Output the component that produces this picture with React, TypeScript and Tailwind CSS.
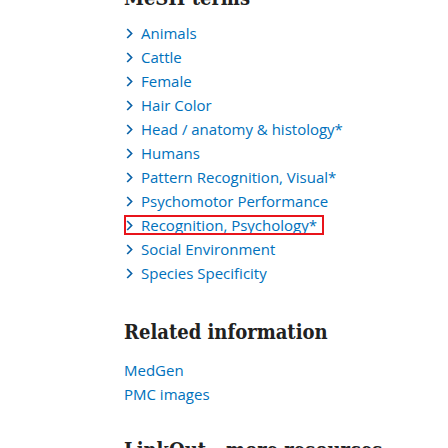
import React from "react";

const meshTerms = [
  "Animals",
  "Cattle",
  "Female",
  "Hair Color",
  "Head / anatomy & histology*",
  "Humans",
  "Pattern Recognition, Visual*",
  "Psychomotor Performance",
  "Recognition, Psychology*",
  "Social Environment",
  "Species Specificity",
];

const related = ["MedGen", "PMC images"];

function Chevron() {
  return (
    <svg width="7" height="11" viewBox="0 0 7 11" className="shrink-0">
      <path d="M1.2 1 L5.6 5.5 L1.2 10" fill="none" stroke="#0b62a8" strokeWidth="1.7" />
    </svg>
  );
}

function Heading({ children }: { children: React.ReactNode }) {
  return (
    <h2 className="h-6 whitespace-nowrap text-[20px] leading-6 font-bold text-[#212121] font-['DejaVu_Serif_Condensed','DejaVu_Serif',serif]">
      {children}
    </h2>
  );
}

export default function App() {
  return (
    <div className="bg-white w-[448px] h-[448px] overflow-hidden">
      <div className="flex flex-col pl-[124px] font-['Open_Sans',sans-serif]">
        {/* MeSH terms heading, scrolled mostly off the top */}
        <div className="-mt-[14px]">
          <Heading>MeSH terms</Heading>
        </div>

        <ul className="mt-[11px] flex flex-col">
          {meshTerms.map((term) => (
            <li key={term} className="h-6 flex items-center text-[15px] text-[#0071bc]">
              {term === "Recognition, Psychology*" ? (
                <a href="#" className="ml-[2px] w-[196px] h-4 flex items-center outline-2 outline-[#e8141b]">
                  <span className="w-[15px] flex items-center">
                    <Chevron />
                  </span>
                  <span className="whitespace-nowrap">{term}</span>
                </a>
              ) : (
                <a href="#" className="ml-[2px] h-4 flex items-center">
                  <span className="w-[15px] flex items-center">
                    <Chevron />
                  </span>
                  <span className="whitespace-nowrap">{term}</span>
                </a>
              )}
            </li>
          ))}
        </ul>

        <div className="mt-[35px]">
          <Heading>Related information</Heading>
        </div>

        <ul className="mt-[14px] flex flex-col">
          {related.map((item) => (
            <li key={item} className="h-6 flex items-center text-[15px] text-[#0071bc]">
              <a href="#">{item}</a>
            </li>
          ))}
        </ul>

        <div className="mt-[32px]">
          <Heading>LinkOut - more resources</Heading>
        </div>
      </div>
    </div>
  );
}
